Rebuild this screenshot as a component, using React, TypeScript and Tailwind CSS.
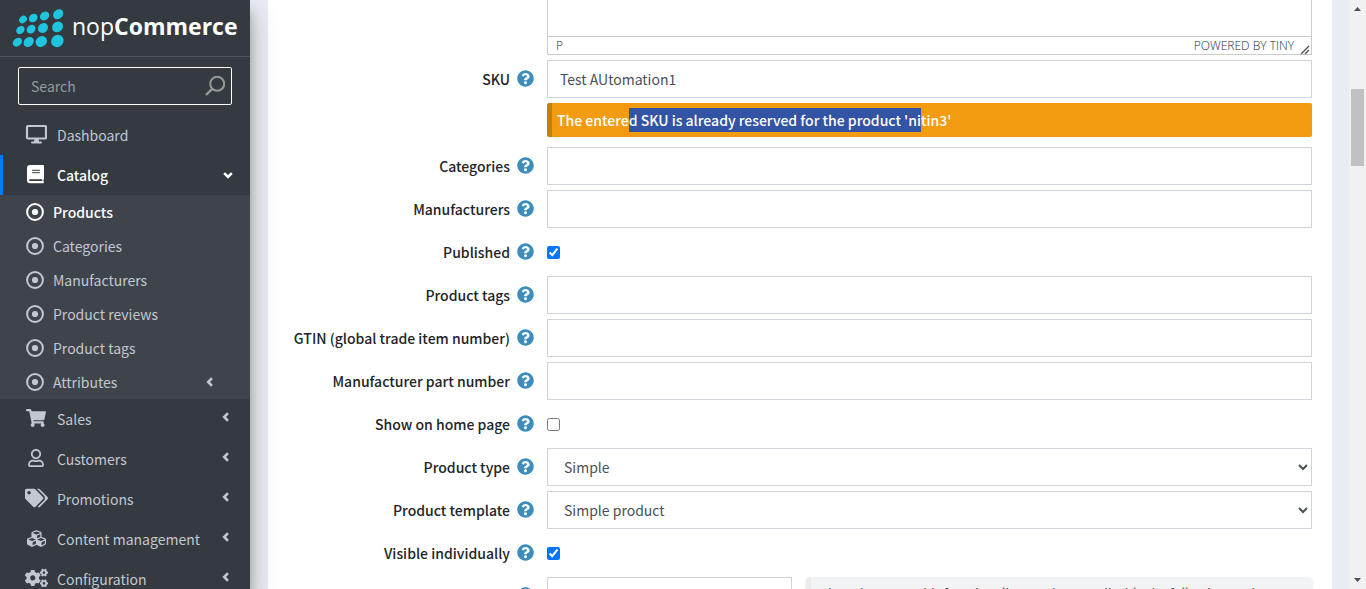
import type { ReactNode } from "react";
import {
  FaShoppingCart,
  FaRegUser,
  FaTags,
  FaCubes,
  FaCogs,
  FaQuestionCircle,
} from "react-icons/fa";
import type { IconType } from "react-icons";

const logoDots = [
  [23, 19.5, 4.2, 3.4], [33.2, 18, 4.7, 3.9], [44.6, 16, 5, 4.2], [58.2, 14.2, 5.5, 4.5],
  [20.4, 30, 4.6, 3.7], [31.1, 29.2, 4.8, 4], [43, 28, 5.4, 4.6], [57.6, 26.8, 5.8, 5.1],
  [17.4, 42.2, 5.1, 3.9], [28.7, 41.9, 5.6, 4.5], [41.3, 41.5, 6, 5.2], [57.4, 41, 6.5, 5.9],
];

function Logo() {
  return (
    <a href="#home" className="flex h-[57px] shrink-0 items-center border-b border-[#4b545c] pl-3">
      <svg viewBox="12 8 54 40" className="h-10 w-[54px]" aria-hidden="true">
        {logoDots.map(([cx, cy, rx, ry], i) => (
          <ellipse key={i} cx={cx} cy={cy} rx={rx} ry={ry} fill="#1fc4df" transform={`rotate(-42 ${cx} ${cy})`} />
        ))}
      </svg>
      <span className="ml-1.5 pb-1 font-['Open_Sans',sans-serif] text-[23px] text-white">
        nop<b className="font-bold">Commerce</b>
      </span>
    </a>
  );
}

const subItems = ["Products", "Categories", "Manufacturers", "Product reviews", "Product tags", "Attributes"];

const lowerItems: { label: string; icon: IconType; iconClass: string }[] = [
  { label: "Sales", icon: FaShoppingCart, iconClass: "text-[20px]" },
  { label: "Customers", icon: FaRegUser, iconClass: "text-[18px]" },
  { label: "Promotions", icon: FaTags, iconClass: "w-[23px] shrink-0 text-[22px]" },
  { label: "Content management", icon: FaCubes, iconClass: "text-[19px]" },
  { label: "Configuration", icon: FaCogs, iconClass: "w-[23px] shrink-0 text-[22px]" },
];

function AngleLeft() {
  return (
    <svg viewBox="0 0 8 10" className="h-2.5 w-2 shrink-0" fill="none" stroke="currentColor" strokeWidth="2.6" aria-hidden="true">
      <path d="M6 1.2 2.2 5 6 8.8" />
    </svg>
  );
}

function AngleDown() {
  return (
    <svg viewBox="0 0 10 8" className="h-2 w-2.5 shrink-0" fill="none" stroke="currentColor" strokeWidth="2.6" aria-hidden="true">
      <path d="M1.2 2.2 5 6l3.8-3.8" />
    </svg>
  );
}

function DotCircle() {
  return (
    <svg viewBox="0 0 18 18" className="size-[18px] shrink-0" fill="none" stroke="currentColor" strokeWidth="2" aria-hidden="true">
      <circle cx="9" cy="9" r="7.9" />
      <circle cx="9" cy="9" r="3.1" fill="currentColor" stroke="none" />
    </svg>
  );
}

function Monitor() {
  return (
    <svg viewBox="0 0 22 20" className="mb-0.5 h-5 w-[22px] shrink-0" aria-hidden="true">
      <rect x="2" y="2" width="19" height="12.5" rx="1" fill="none" stroke="currentColor" strokeWidth="2.2" />
      <path d="M9.5 15h4l.6 2.4h1.9a1 1 0 0 1 0 2H7a1 1 0 0 1 0-2h1.9z" fill="currentColor" />
    </svg>
  );
}

function Book() {
  return (
    <svg viewBox="0 0 22 20" className="mb-0.5 h-5 w-[22px] shrink-0" aria-hidden="true">
      <path d="M5 1h13a1 1 0 0 1 1 1v12.4c0 .4-.2.7-.5.9v2.2c.6.2.5 1.8-.3 1.8H5a3 3 0 0 1-3-3V4a3 3 0 0 1 3-3z" fill="currentColor" />
      <path d="M7.2 6.3h7.6M7.2 8.7h7.6" stroke="#343a40" strokeWidth="1" />
      <path d="M5 16.2h11.5" stroke="#343a40" strokeWidth="1.8" strokeLinecap="round" />
    </svg>
  );
}

function Sidebar() {
  return (
    <aside className="z-10 flex w-[250px] shrink-0 flex-col overflow-hidden bg-[#343a40] text-[14px] text-[#c2c7d0] shadow-[0_14px_28px_rgba(0,0,0,.25),0_10px_10px_rgba(0,0,0,.22)]">
      <Logo />
      <label className="mx-[18px] mt-2.5 flex h-[38px] shrink-0 items-center rounded-xs border border-white pr-1.5 pl-3">
        <input aria-label="Search" placeholder="Search" className="w-full min-w-0 bg-transparent outline-none placeholder:text-[#939ba2]" />
        <svg viewBox="0 0 20 20" className="size-5 shrink-0" fill="none" stroke="#999" strokeWidth="2" aria-hidden="true">
          <circle cx="12.2" cy="7.8" r="7" />
          <path d="M7.2 12.8 1 19" strokeWidth="2.4" />
        </svg>
      </label>
      <nav className="mt-2.5">
        <a href="#dashboard" className="flex h-10 items-center pl-[25px]">
          <Monitor />
          <span className="ml-2.5">Dashboard</span>
        </a>
        <a href="#catalog" className="flex h-10 items-center border-l-3 border-[#007bff] pr-[17px] pl-[22px] text-white">
          <Book />
          <span className="ml-2.5 grow font-medium">Catalog</span>
          <AngleDown />
        </a>
        <ul className="bg-[#3f444c]">
          {subItems.map((s, i) => (
            <li key={s}>
              <a href="#sub" className={i === 0 ? "flex h-[34px] items-center pl-[26px] font-medium text-white" : "flex h-[34px] items-center pr-9 pl-[26px]"}>
                <DotCircle />
                <span className="ml-[9px] grow">{s}</span>
                {s === "Attributes" && <AngleLeft />}
              </a>
            </li>
          ))}
        </ul>
        {lowerItems.map(({ label, icon: Icon, iconClass }) => (
          <a key={label} href="#section" className="flex h-10 items-center pr-5 pl-[25px]">
            <span className="mb-0.5 flex w-[22px] justify-center">
              <Icon className={iconClass} />
            </span>
            <span className="ml-2.5 grow">{label}</span>
            <span className="mb-1">
              <AngleLeft />
            </span>
          </a>
        ))}
      </nav>
    </aside>
  );
}

function Row({ label, id, children }: { label: string; id: string; children: ReactNode }) {
  return (
    <div className="mb-[5px] flex">
      <div className="flex h-[38px] w-[266px] shrink-0 items-center justify-end gap-[7px] text-[#212529]">
        <label htmlFor={id} className="text-[14px] font-medium">{label}</label>
        <FaQuestionCircle className="mb-0.5 text-[17px] text-[#3c8dbc]" />
      </div>
      <div className="ml-[13px] flex min-w-0 grow flex-col">{children}</div>
    </div>
  );
}

const fieldClass = "h-[38px] w-full border border-[#ced4da] bg-white px-3 text-[14px] text-[#495057] outline-none";

function TextRow({ label, id, value = "" }: { label: string; id: string; value?: string }) {
  return (
    <Row label={label} id={id}>
      <input id={id} defaultValue={value} className={fieldClass} />
    </Row>
  );
}

function CheckRow({ label, id, checked }: { label: string; id: string; checked: boolean }) {
  return (
    <Row label={label} id={id}>
      <div className="flex h-[38px] items-center">
        <input id={id} type="checkbox" defaultChecked={checked} className="size-[13px] accent-[#0075ff]" />
      </div>
    </Row>
  );
}

function SelectRow({ label, id, value }: { label: string; id: string; value: string }) {
  return (
    <Row label={label} id={id}>
      <select id={id} className="h-[38px] w-full border border-[#ced4da] bg-white px-3 text-[14px] text-[#495057]">
        <option>{value}</option>
      </select>
    </Row>
  );
}

export default function App() {
  return (
    <div className="flex h-screen overflow-hidden bg-[#e9edf3] font-['Noto_Sans_CJK_SC',sans-serif]">
      <Sidebar />
      <main className="ml-[18px] min-w-0 grow bg-white pr-5">
        <div className="mb-[5px] ml-[279px] flex h-[55px] flex-col border border-t-0 border-[#ccc]">
          <div className="grow" />
          <div className="flex h-[18px] shrink-0 items-center border-t border-[#ccc] pr-px pl-2 font-['Open_Sans',sans-serif] text-[12px] font-light text-[#222f3e]">
            <span className="grow">P</span>
            <a href="#tiny">POWERED BY TINY</a>
            <svg viewBox="0 0 10 10" className="mt-2 ml-1.5 size-2.5" stroke="#555" strokeWidth="1.4" aria-hidden="true">
              <path d="M1 9 9 1M5 9 9 5" />
            </svg>
          </div>
        </div>
        <Row label="SKU" id="sku">
          <input id="sku" defaultValue="Test AUtomation1" className={fieldClass} />
          <p className="mt-[5px] mb-[5px] flex h-[34px] items-center rounded-xs border-l-5 border-[#c87f0a] bg-[#f39c12] pl-[5px] text-[14px] font-medium whitespace-pre text-white">
            The entere<mark className="h-6 bg-[#3353a4] leading-6 text-white">d SKU is already reserved for the product 'ni</mark>tin3'
          </p>
        </Row>
        <TextRow label="Categories" id="categories" />
        <TextRow label="Manufacturers" id="manufacturers" />
        <CheckRow label="Published" id="published" checked />
        <TextRow label="Product tags" id="tags" />
        <TextRow label="GTIN (global trade item number)" id="gtin" />
        <TextRow label="Manufacturer part number" id="mpn" />
        <CheckRow label="Show on home page" id="home" checked={false} />
        <SelectRow label="Product type" id="type" value="Simple" />
        <SelectRow label="Product template" id="template" value="Simple product" />
        <CheckRow label="Visible individually" id="visible" checked />
        <Row label="Customer roles" id="roles">
          <div className="flex gap-3.5">
            <input id="roles" className="h-[38px] w-[245px] shrink-0 border border-[#ced4da]" />
            <p className="grow rounded border-l-5 border-[#e9ecef] bg-[#f1f3f5] py-1.5 pr-4 pl-[17px] text-[13px] text-[#495057] shadow-sm">
              In order to use this functionality, you have to disable the following setting:
            </p>
          </div>
        </Row>
      </main>
      <div className="w-[17px] shrink-0" />
      <div className="flex w-[17px] shrink-0 flex-col items-center bg-[#f1f1f1]" aria-hidden="true">
        <svg viewBox="0 0 7 4" className="mt-[7px] h-1 w-[7px]" fill="#505050"><path d="M3.5 0 7 4H0z" /></svg>
        <div className="mt-[78px] h-[77px] w-[13px] bg-[#c1c1c1]" />
        <div className="grow" />
        <svg viewBox="0 0 7 4" className="mb-[7px] h-1 w-[7px]" fill="#505050"><path d="M0 0h7L3.5 4z" /></svg>
      </div>
    </div>
  );
}
